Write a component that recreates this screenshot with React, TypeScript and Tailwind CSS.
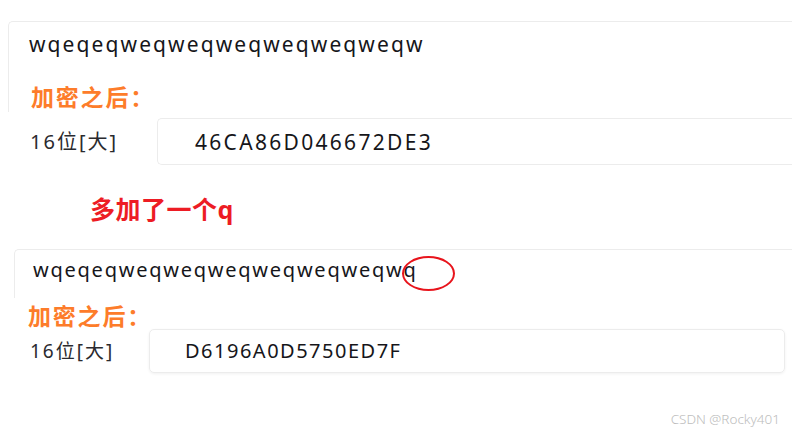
import React from "react";

export default function App() {
  return (
    <div className="relative w-[792px] h-[434px] overflow-hidden bg-white font-['Noto_Sans','Noto_Sans_CJK_SC',sans-serif]">
      {/* Section 1 */}
      <div className="ml-[8px] mt-[21px] w-[820px] h-[91px] border-t border-l border-[#ececec] rounded-tl-[5px] pl-[20px] pt-[8px]">
        <div className="text-[21px] leading-[28px] tracking-[2.1px] text-[#16161a]">
          wqeqeqweqweqweqweqweqweqw
        </div>
        <div className="ml-[2px] mt-[26px] text-[23px] leading-[26px] tracking-[1.8px] font-bold text-[#fd7c2a]">
          加密之后：
        </div>
      </div>
      <div className="mt-[6px] flex items-center h-[47px]">
        <div className="shrink-0 ml-[30px] w-[127px] text-[20px] leading-[28px] tracking-[2px] text-[#2a2a2e]">
          16位[大]
        </div>
        <div className="shrink-0 w-[660px] h-[47px] flex items-center border border-r-0 border-[#ececec] rounded-l-[5px] pl-[37px]">
          <span className="text-[21px] leading-[28px] tracking-[2.3px] text-[#16161a]">
            46CA86D046672DE3
          </span>
        </div>
      </div>

      {/* Section 2 */}
      <div className="ml-[90px] mt-[29px] text-[25px] leading-[30px] tracking-[0.5px] font-bold text-[#ed1c24]">
        多加了一个q
      </div>
      <div className="ml-[14px] mt-[25px] w-[800px] h-[49px] border-t border-l border-[#ececec] rounded-tl-[5px] pl-[18px] pt-[7px]">
        <div className="text-[20px] leading-[26px] tracking-[1.75px] text-[#16161a]">
          wqeqeqweqweqweqweqweqweqwq
        </div>
      </div>
      <div className="ml-[28px] mt-[5px] text-[23px] leading-[26px] tracking-[1.8px] font-bold text-[#fd7c2a]">
        加密之后：
      </div>
      <div className="flex items-center h-[44px]">
        <div className="shrink-0 ml-[30px] w-[119px] text-[19px] leading-[26px] tracking-[2px] text-[#2a2a2e]">
          16位[大]
        </div>
        <div className="shrink-0 w-[636px] h-[44px] flex items-center border border-[#ececec] rounded-[5px] shadow-[0_1px_3px_rgba(0,0,0,0.06)] pl-[35px]">
          <span className="text-[20px] leading-[26px] tracking-[1.5px] text-[#16161a]">
            D6196A0D5750ED7F
          </span>
        </div>
      </div>

      {/* red ellipse annotation */}
      <div className="absolute left-[402px] top-[256px] w-[53px] h-[35px] rounded-[50%] border-2 border-[#e8141c]" />

      {/* watermark */}
      <div className="absolute right-[12px] top-[410px] text-[13.5px] leading-[18px] text-[#bdbdbd] font-light">
        CSDN @Rocky401
      </div>
    </div>
  );
}
